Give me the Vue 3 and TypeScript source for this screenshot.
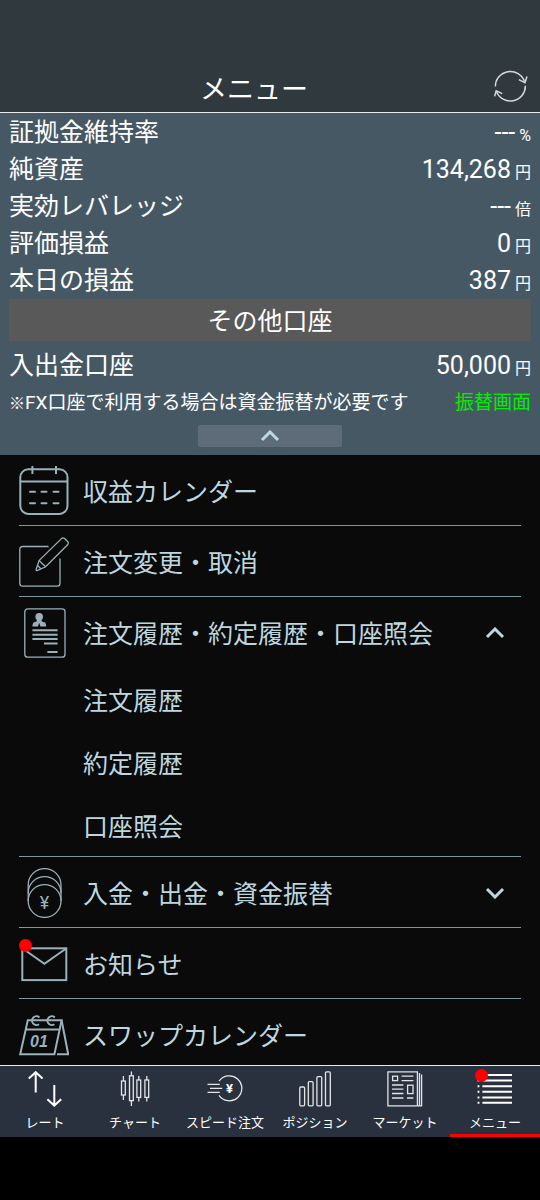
<script setup lang="ts">
import { ref } from 'vue'

interface Metric {
  label: string
  value: string
  unit: string
}

interface MenuEntry {
  id: string
  label: string
  badge?: boolean
  children?: string[]
}

interface Tab {
  id: string
  label: string
  badge?: boolean
}

const metrics: Metric[] = [
  { label: '証拠金維持率', value: '---', unit: '%' },
  { label: '純資産', value: '134,268', unit: '円' },
  { label: '実効レバレッジ', value: '---', unit: '倍' },
  { label: '評価損益', value: '0', unit: '円' },
  { label: '本日の損益', value: '387', unit: '円' },
]

const entries: MenuEntry[] = [
  { id: 'calendar', label: '収益カレンダー' },
  { id: 'edit', label: '注文変更・取消' },
  {
    id: 'history',
    label: '注文履歴・約定履歴・口座照会',
    children: ['注文履歴', '約定履歴', '口座照会'],
  },
  { id: 'coins', label: '入金・出金・資金振替', children: ['入金', '出金', '資金振替'] },
  { id: 'mail', label: 'お知らせ', badge: true },
  { id: 'swap', label: 'スワップカレンダー' },
]

const tabs: Tab[] = [
  { id: 'rate', label: 'レート' },
  { id: 'chart', label: 'チャート' },
  { id: 'speed', label: 'スピード注文' },
  { id: 'position', label: 'ポジション' },
  { id: 'market', label: 'マーケット' },
  { id: 'menu', label: 'メニュー', badge: true },
]

const activeTab = ref('menu')
const openGroup = ref('history')
const summaryOpen = ref(true)

function toggleGroup(id: string) {
  openGroup.value = openGroup.value === id ? '' : id
}
</script>

<template>
  <div class="screen">
    <header class="header">
      <h1 class="title">メニュー</h1>
      <button class="refresh" type="button" aria-label="更新">
        <svg width="34" height="34" viewBox="0 0 34 34">
          <path d="M1.4 16.6A15 15 0 0 1 30.6 11.6" />
          <path d="M24.8 9.6L31 12.6L33 6.6" />
          <path d="M31.4 15.8A15 15 0 0 1 2.4 21.4" />
          <path d="M.6 26.4L2.2 20.8L8.2 23.6" />
        </svg>
      </button>
    </header>

    <section class="summary">
      <dl v-if="summaryOpen" class="metrics">
        <div v-for="m in metrics" :key="m.label" class="metric">
          <dt>{{ m.label }}</dt>
          <dd>{{ m.value }}<span class="unit">{{ m.unit }}</span></dd>
        </div>
      </dl>
      <h2 class="other">その他口座</h2>
      <dl class="metrics balance">
        <div class="metric">
          <dt>入出金口座</dt>
          <dd>50,000<span class="unit">円</span></dd>
        </div>
      </dl>
      <div class="note">
        <p><span class="mark">※</span>FX口座で利用する場合は資金振替が必要です</p>
        <a href="#transfer">振替画面</a>
      </div>
      <button
        class="collapse"
        type="button"
        aria-label="開閉"
        :aria-expanded="summaryOpen"
        @click="summaryOpen = !summaryOpen"
      >
        <svg class="chevron" :class="{ down: !summaryOpen }" width="20" height="12" viewBox="0 0 20 12">
          <path d="M2 10L10 2L18 10" />
        </svg>
      </button>
    </section>

    <main class="menu">
      <ul class="list">
        <li v-for="e in entries" :key="e.id" class="entry">
          <component
            :is="e.children ? 'button' : 'a'"
            class="row"
            :type="e.children ? 'button' : undefined"
            :href="e.children ? undefined : '#' + e.id"
            :aria-expanded="e.children ? openGroup === e.id : undefined"
            @click="e.children && toggleGroup(e.id)"
          >
            <span class="icon">
              <svg v-if="e.id === 'calendar'" class="bold" width="50" height="50" viewBox="0 0 50 50">
                <rect x="1.3" y="3.3" width="47.2" height="44.6" rx="8" />
                <path d="M1.3 15.4H48.5M13.4 0V8M37 0V8" />
                <path d="M11 25.7H16M22.5 25.7H27.5M34.5 25.7H39.5M11 37.3H16M22.5 37.3H27.5M34.5 37.3H39.5" stroke-linecap="round" />
              </svg>
              <svg v-else-if="e.id === 'edit'" width="50" height="50" viewBox="0 0 50 50">
                <path d="M29.5 9.5H4Q.8 9.5 .8 12.5V46Q.8 49.2 4 49.2H38Q41 49.2 41 46V21.5" />
                <path d="M20.2 23.4L42.5 1.6Q44 .2 45.6 1.6L48.6 4.5Q50 6 48.6 7.8L26.6 29.8L18.6 33.4Q16.8 34 17.2 32.2Z" />
                <path d="M20.2 23.4L22.6 26L26.6 29.8M18.6 28.4L21.8 31.8" />
              </svg>
              <svg v-else-if="e.id === 'history'" width="50" height="50" viewBox="0 0 50 50">
                <rect x="5.8" y=".8" width="40.2" height="48.4" rx="3" />
                <circle class="solid" cx="20.2" cy="8.8" r="3.8" />
                <path class="solid" d="M18 11H22.4L22.8 13.4L26 14.6Q27.2 15.6 27.2 18.6H21.4L20.2 14.8L19 18.6H13.4Q13.4 15.6 14.6 14.6L17.6 13.4Z" />
                <path class="bold" d="M13.4 22.3H38.6M13.4 26.7H38.6M13.4 31H38.6M25 35.4H38.6M28.4 44H38.6" />
              </svg>
              <svg v-else-if="e.id === 'coins'" width="50" height="50" viewBox="0 0 50 50">
                <path d="M9.2 33V17A16.4 16.4 0 0 1 42 17V33" />
                <path d="M9.2 25A16.4 16.4 0 0 1 42 25" />
                <circle cx="25.6" cy="33" r="16.4" />
                <text class="yen" x="25.6" y="41" text-anchor="middle">¥</text>
              </svg>
              <svg v-else-if="e.id === 'mail'" class="bold" width="50" height="50" viewBox="0 0 50 50">
                <rect x="3.3" y="9.3" width="44" height="31.8" />
                <path d="M4 9.8L25.4 24.8L46.8 9.8" />
              </svg>
              <svg v-else class="bold" width="50" height="50" viewBox="0 0 50 50">
                <path d="M8.8 10.2H42.6L35.4 44.2H1.2Z" />
                <path d="M6.6 19.4H40.4M42.6 10.2L49.2 44.2H38" />
                <path d="M20.4 7.4A4.4 4.4 0 1 0 20 14.2M35.8 7.4A4.4 4.4 0 1 0 35.4 14.2" />
                <text class="day" x="20" y="37" text-anchor="middle">01</text>
              </svg>
              <span v-if="e.badge" class="badge"></span>
            </span>
            <span class="label">{{ e.label }}</span>
            <svg
              v-if="e.children"
              class="chevron"
              :class="{ down: openGroup !== e.id }"
              width="20"
              height="12"
              viewBox="0 0 20 12"
            >
              <path d="M2 10L10 2L18 10" />
            </svg>
          </component>
          <ul v-if="e.children && openGroup === e.id" class="sublist">
            <li v-for="c in e.children" :key="c">
              <a class="sub" :href="'#' + e.id">{{ c }}</a>
            </li>
          </ul>
        </li>
      </ul>
    </main>

    <nav class="tabs">
      <button
        v-for="t in tabs"
        :key="t.id"
        class="tab"
        :class="{ active: activeTab === t.id }"
        type="button"
        @click="activeTab = t.id"
      >
        <span class="tab-icon">
          <svg v-if="t.id === 'rate'" class="arrows" width="36" height="36" viewBox="0 0 36 36">
            <path d="M8.7 21.6V1.4M1.8 7.6L8.7 1.2L15.6 7.6" />
            <path d="M27.3 14V34.4M20.4 28.2L27.3 34.6L34.2 28.2" />
          </svg>
          <svg v-else-if="t.id === 'chart'" width="36" height="36" viewBox="0 0 36 36">
            <path d="M6.4 5V10M6.4 24V29M14.4 .5V4.8M14.4 29.6V35M21.8 5V9M21.8 26.4V30.6M29.8 5V9M29.8 26.4V30.6" />
            <rect x="4.5" y="10" width="3.8" height="14" />
            <rect x="12.5" y="4.8" width="3.8" height="24.8" />
            <rect x="19.9" y="9" width="3.8" height="17.4" />
            <rect x="27.9" y="9" width="3.8" height="17.4" />
          </svg>
          <svg v-else-if="t.id === 'speed'" width="36" height="36" viewBox="0 0 36 36">
            <path d="M12 10.2A12.5 12.5 0 1 1 12 24.4" />
            <path d="M.5 13.4H12.8M3 17.4H15.3M.5 21.4H12.8" />
            <text class="yen-bold" x="22.4" y="22" text-anchor="middle">¥</text>
          </svg>
          <svg v-else-if="t.id === 'position'" width="36" height="36" viewBox="0 0 36 36">
            <rect x="2.8" y="16" width="4.8" height="18.8" rx="1" />
            <rect x="11.3" y="10.6" width="4.8" height="24.2" rx="1" />
            <rect x="19.9" y="5.6" width="4.8" height="29.2" rx="1" />
            <rect x="28.5" y=".9" width="4.8" height="33.9" rx="1" />
          </svg>
          <svg v-else-if="t.id === 'market'" width="36" height="36" viewBox="0 0 36 36">
            <path d="M30.4 34.8H.9V.9H30.4ZM30.4 34.8H34.6V3.6M32.5 34.8V2" />
            <rect x="5.6" y="5.2" width="5" height="4.4" />
            <rect x="20.6" y="14.2" width="5.4" height="8.4" />
            <path d="M14.6 5.2H26.4M14.6 9.6H26.4M5 14H16.4M5 18.2H16.4M5 22.5H16.4M5 27H16.4M20 27H26.4" />
          </svg>
          <svg v-else class="lines" width="36" height="36" viewBox="0 0 36 36">
            <path d="M5.4 4H35M5.4 9.6H35M5.4 15.2H35M5.4 20.8H35M5.4 26.4H35M5.4 31.8H35" />
            <path d="M.6 4H2.4M.6 9.6H2.4M.6 15.2H2.4M.6 20.8H2.4M.6 26.4H2.4M.6 31.8H2.4" />
          </svg>
          <span v-if="t.badge" class="badge"></span>
        </span>
        <span class="tab-label">{{ t.label }}</span>
      </button>
    </nav>
  </div>
</template>

<style>
body {
  margin: 0;
  background: #000;
}
</style>

<style scoped>
.screen {
  display: flex;
  flex-direction: column;
  height: 100vh;
  padding-bottom: 63px;
  box-sizing: border-box;
  background: #000;
  color: #fff;
  font-family: Roboto, 'Noto Sans CJK JP', sans-serif;
  font-size: 25px;
}

h1,
h2,
p,
dl,
dd,
ul {
  margin: 0;
  padding: 0;
  font-weight: 400;
  list-style: none;
}

button {
  margin: 0;
  padding: 0;
  border: 0;
  background: none;
  color: inherit;
  font: inherit;
  cursor: pointer;
}

a {
  color: inherit;
  text-decoration: none;
}

svg {
  display: block;
  fill: none;
}

.header {
  display: flex;
  align-items: center;
  flex: none;
  padding: 62px 12px 0 14px;
  border-bottom: 1px solid #e6ebed;
  background: #2f393e;
}

.title {
  flex: 1;
  padding-top: 6px;
  font-size: 27px;
  line-height: 44px;
  text-align: center;
}

.refresh svg {
  stroke: #d5d9da;
  stroke-width: 1.5;
}

.summary {
  flex: none;
  padding: 1px 9px 8px;
  background: #475865;
}

.metric {
  display: flex;
  justify-content: space-between;
  align-items: baseline;
  line-height: 37px;
}

.unit {
  margin-left: 4px;
  font-size: 16px;
  line-height: 1;
}

.other {
  padding-top: 4px;
  background: #595959;
  font-size: 25px;
  line-height: 38px;
  text-align: center;
}

.balance {
  padding-top: 6px;
}

.note {
  display: flex;
  justify-content: space-between;
  padding-top: 2px;
  font-size: 19px;
  line-height: 34px;
}

.mark {
  font-size: 16px;
  line-height: 1;
}

.note a {
  color: #00f000;
}

.collapse {
  display: flex;
  align-items: center;
  justify-content: center;
  width: 144px;
  height: 22px;
  margin: 5px auto 0;
  border-radius: 2px;
  background: #5d6c78;
}

.chevron {
  flex: none;
  stroke: #bdd6df;
  stroke-width: 3;
}

.down {
  transform: rotate(180deg);
}

.menu {
  flex: 1;
  min-height: 0;
  overflow-y: auto;
  scrollbar-width: none;
  background: #0a0a0a;
  color: #bdd6df;
}

.list {
  padding: 0 19px;
}

.entry {
  border-bottom: 1px solid #81979f;
}

.row {
  display: flex;
  align-items: center;
  gap: 14px;
  width: 100%;
  height: 70px;
  padding: 2px 16px 0 0;
  box-sizing: border-box;
  text-align: left;
}

.label {
  flex: 1;
  padding-bottom: 2px;
}

.icon,
.tab-icon {
  position: relative;
  flex: none;
}

.icon svg {
  stroke: #9bb0b9;
  stroke-width: 1.3;
}

.icon .bold {
  stroke-width: 2;
}

.icon .solid {
  fill: #9bb0b9;
  stroke: none;
}

.icon text {
  fill: #9bb0b9;
  stroke: none;
}

.yen {
  font-size: 18px;
}

.day {
  font-family: 'Liberation Sans', sans-serif;
  font-size: 16px;
  font-style: italic;
  font-weight: 700;
}

.badge {
  position: absolute;
  top: 0;
  left: 0;
  width: 13px;
  height: 13px;
  border-radius: 50%;
  background: #f00;
}

.tab-icon .badge {
  top: -2px;
  left: -2px;
}

.sublist {
  display: grid;
  gap: 13px;
  padding: 10px 0 3px 64px;
}

.sub {
  display: block;
  line-height: 50px;
}

.tabs {
  display: flex;
  flex: none;
  border-top: 1px solid #e6ebed;
  background: #2a313e;
}

.tab {
  display: flex;
  flex: 1 1 0;
  flex-direction: column;
  align-items: center;
  min-width: 0;
  padding-top: 5px;
  border-bottom: 3px solid transparent;
}

.active {
  border-bottom-color: #f00;
}

.tab-icon svg {
  stroke: #e2e5e8;
  stroke-width: 1.3;
}

.tab-icon .arrows,
.tab-icon .lines {
  stroke: #fff;
  stroke-width: 2;
}

.yen-bold {
  fill: #fff;
  stroke: none;
  font-size: 13px;
  font-weight: 700;
}

.tab-label {
  padding-top: 4px;
  font-size: 13px;
  line-height: 23px;
  white-space: nowrap;
}
</style>
